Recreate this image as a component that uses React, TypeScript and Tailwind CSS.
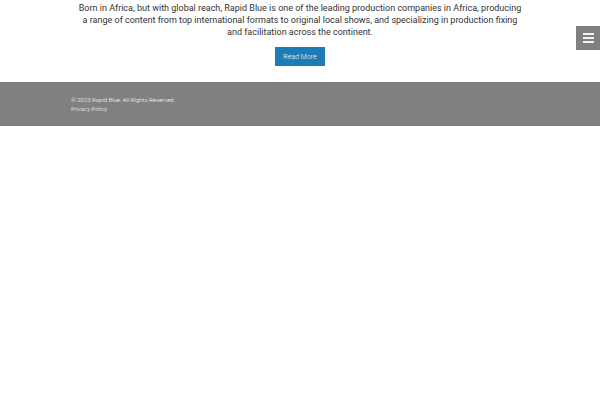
export default function App() {
  return (
    <div className="min-h-screen bg-white font-['Roboto',sans-serif]">
      <button
        type="button"
        aria-label="Menu"
        className="fixed right-0 top-[26px] flex h-6 w-6 flex-col items-center justify-center gap-[2px] bg-[#808080]"
      >
        <span className="h-[2px] w-[11px] bg-white/90" />
        <span className="h-[2px] w-[11px] bg-white/90" />
        <span className="h-[2px] w-[11px] bg-white/90" />
      </button>

      <main className="mx-auto flex max-w-[458px] flex-col items-center pb-4 pt-0.5">
        <p className="text-center text-[9px] leading-[12px] text-[#333333]">
          Born in Africa, but with global reach, Rapid Blue is one of the leading production companies in Africa, producing
          <br />
          a range of content from top international formats to original local shows, and specializing in production fixing
          <br />
          and facilitation across the continent.
        </p>
        <a
          href="#about"
          className="mt-[9px] bg-[#1c7cb6] px-2 pb-[2px] pt-1 text-[7px] font-light leading-[13px] text-white"
        >
          Read More
        </a>
      </main>

      <footer className="bg-[#808080] py-[13px] text-[6px] font-light leading-[9px] text-white">
        <div className="mx-auto max-w-[458px]">
          <p>© 2023 Rapid Blue. All Rights Reserved.</p>
          <a href="#privacy" className="block">
            Privacy Policy
          </a>
        </div>
      </footer>
    </div>
  );
}
